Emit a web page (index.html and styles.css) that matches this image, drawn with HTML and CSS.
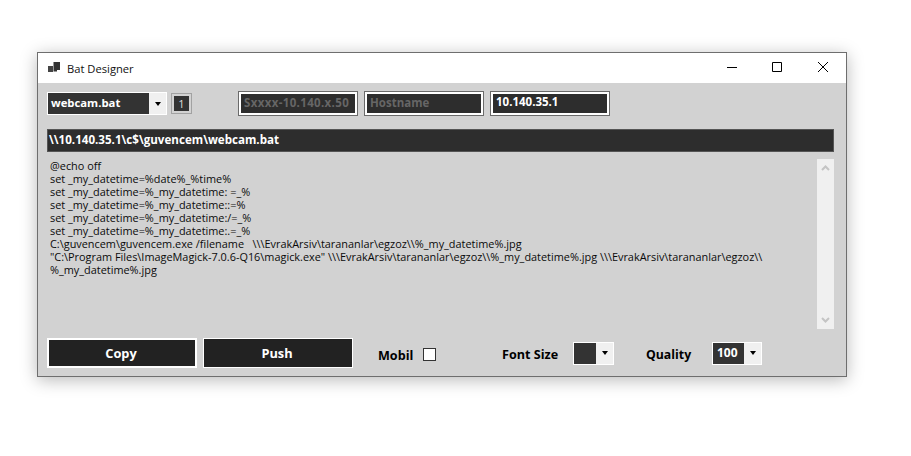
FILE: index.html
```html
<!DOCTYPE html>
<html lang="en">
<head>
<meta charset="utf-8">
<title>Bat Designer</title>
<link rel="stylesheet" href="styles.css">
</head>
<body>
<div class="window">
  <header class="titlebar">
    <svg class="app-icon" width="12" height="11" viewBox="0 0 12 11"><path d="M0 4h5v6H0z" fill="#444"/><path d="M5.500 0h6.500v8H9v1.500H5.500z" fill="#333"/></svg>
    <span class="title">Bat Designer</span>
    <div class="controls">
      <div class="ctl ctl-min"><svg width="10" height="10" viewBox="0 0 10 10"><path d="M0 5.500h10" stroke="#000" fill="none"/></svg></div>
      <div class="ctl"><svg width="10" height="10" viewBox="0 0 10 10"><path d="M.5.5h9v9h-9z" stroke="#000" fill="none"/></svg></div>
      <div class="ctl"><svg width="10" height="10" viewBox="0 0 10 10"><path d="M0 0l10 10M10 0L0 10" stroke="#000" stroke-width="1" fill="none"/></svg></div>
    </div>
  </header>
  <main class="content">
    <div class="top-row">
      <div class="combo combo-file"><span class="combo-value">webcam.bat</span><span class="combo-btn"><i class="caret"></i></span></div>
      <div class="badge"><span>1</span></div>
      <div class="textbox muted tb-first">Sxxxx-10.140.x.50</div>
      <div class="textbox muted">Hostname</div>
      <div class="textbox bright">10.140.35.1</div>
    </div>
    <div class="path-bar">\\10.140.35.1\c$\guvencem\webcam.bat</div>
    <div class="editor">
      <pre class="code">@echo off
set _my_datetime=%date%_%time%
set _my_datetime=%_my_datetime: =_%
set _my_datetime=%_my_datetime::=%
set _my_datetime=%_my_datetime:/=_%
set _my_datetime=%_my_datetime:.=_%
C:\guvencem\guvencem.exe /filename   \\\EvrakArsiv\tarananlar\egzoz\\%_my_datetime%.jpg
"C:\Program Files\ImageMagick-7.0.6-Q16\magick.exe" \\\EvrakArsiv\tarananlar\egzoz\\%_my_datetime%.jpg \\\EvrakArsiv\tarananlar\egzoz\\
%_my_datetime%.jpg</pre>
      <div class="scrollbar">
        <svg width="9" height="6" viewBox="0 0 9 6"><path d="M1 5l3.5-3.5L8 5" stroke="#c4c4c4" stroke-width="2" fill="none"/></svg>
        <svg width="9" height="6" viewBox="0 0 9 6"><path d="M1 1l3.5 3.5L8 1" stroke="#c4c4c4" stroke-width="2" fill="none"/></svg>
      </div>
    </div>
    <div class="bottom-row">
      <button class="btn btn-focus">Copy</button>
      <button class="btn">Push</button>
      <span class="label label-mobil">Mobil</span>
      <span class="checkbox"></span>
      <span class="label label-font">Font Size</span>
      <div class="combo combo-font"><span class="combo-value"></span><span class="combo-btn"><i class="caret"></i></span></div>
      <span class="label label-quality">Quality</span>
      <div class="combo combo-quality"><span class="combo-value">100</span><span class="combo-btn"><i class="caret"></i></span></div>
    </div>
  </main>
</div>
</body>
</html>
```
FILE: styles.css
```css
* { box-sizing: border-box; }
html, body { margin: 0; height: 100%; background: #fff; overflow: hidden; }
body { padding: 52px 0 0 37px; font-family: "Open Sans", "Noto Sans", sans-serif; }
.window {
  width: 810px; height: 325px;
  border: 1px solid #6e6e6e;
  background: #d2d2d2;
  box-shadow: 0 3px 16px rgba(0,0,0,.28);
  display: flex; flex-direction: column;
}
.titlebar {
  height: 30px; background: #fff; display: flex; align-items: center;
  padding-left: 10px; flex: none;
}
.app-icon { flex: none; margin-bottom: 1px; }
.title { margin-left: 7px; font-size: 11.2px; color: #111; }
.controls { margin-left: auto; display: flex; height: 100%; }
.ctl { width: 46px; display: flex; align-items: center; justify-content: center; padding-bottom: 2px; }
.ctl-min { padding-left: 2px; }
.ctl svg { display: block; }
.content { flex: 1; padding: 8px 12px 0 9px; display: flex; flex-direction: column; }
.top-row { display: flex; align-items: center; height: 25px; gap: 6px; }
.combo { display: flex; height: 23px; border: 1px solid #fff; background: #f0f0f0; flex: none; }
.combo-value { flex: 1; background: #333; color: #fff; font-weight: 700; font-size: 11.3px; line-height: 20px; padding-left: 3px; }
.combo-btn { display: flex; align-items: center; justify-content: center; flex: none; }
.caret { width: 0; height: 0; border: 3.5px solid transparent; border-top: 4px solid #000; border-bottom: 0; }
.combo-file { width: 120px; }
.combo-file .combo-btn { width: 17px; }
.badge {
  width: 21px; height: 21px; border: 1px solid #a2a2a2; padding: 2px;
  margin-left: -2px; flex: none;
}
.badge span { display: block; height: 100%; background: #333; color: #ddd; font-size: 11px; line-height: 15px; text-align: center; }
.textbox {
  width: 120px; height: 25px; flex: none;
  border: 1px solid #6a6a6a; outline: 1px solid #fff; outline-offset: -2px;
  background: #2d2d2d; box-shadow: inset 0 0 0 2px #fff;
  font-weight: 700; font-size: 11.5px; line-height: 22px; padding-left: 5px;
}
.tb-first { margin-left: 40px; letter-spacing: .35px; }
.muted { color: #666; }
.bright { color: #fff; line-height: 20px; }
.path-bar {
  margin-top: 13px; height: 23px; flex: none;
  background: #2d2d2d; border: 1px solid #555; color: #fff;
  font-weight: 700; font-size: 11.6px; line-height: 19px; padding-left: 1px;
}
.editor { margin-top: 7px; height: 170px; flex: none; display: flex; }
.code {
  flex: 1; margin: 0; padding: 0 0 0 3px; color: #0a0a0a;
  font-family: "Open Sans", "Noto Sans", sans-serif; font-size: 10.9px; line-height: 13px; white-space: pre;
  overflow: hidden;
}
.scrollbar {
  width: 17px; flex: none; background: #f0f0f0;
  display: flex; flex-direction: column; justify-content: space-between; align-items: center;
  padding: 6px 0;
}
.scrollbar svg { display: block; }
.bottom-row { margin-top: 9px; height: 30px; display: flex; align-items: center; flex: none; }
.btn {
  width: 150px; height: 30px; flex: none; background: #222; color: #fff;
  border: 1px solid #fff; font: 700 12.8px "Open Sans", "Noto Sans", sans-serif; padding: 0 2px 0 0;
}
.btn-focus { border-width: 2px; margin-right: 6px; }
.label { font-weight: 700; font-size: 12.6px; color: #000; flex: none; padding-top: 2px; }
.label-mobil { margin-left: 25px; width: 45px; padding-top: 4px; }
.checkbox { width: 13px; height: 13px; background: #fff; border: 1px solid #333; margin-top: 2px; flex: none; }
.label-font { margin-left: 66px; width: 71px; }
.combo-font { width: 41px; }
.combo-font .combo-value { flex: none; width: 22px; }
.combo-font .combo-btn { flex: 1; }
.label-quality { margin-left: 32px; width: 66px; font-size: 12.3px; }
.combo-quality { width: 50px; }
.combo-quality .combo-value { flex: none; width: 31px; padding-left: 4px; font-size: 12px; }
.combo-quality .combo-btn { flex: 1; }
```
